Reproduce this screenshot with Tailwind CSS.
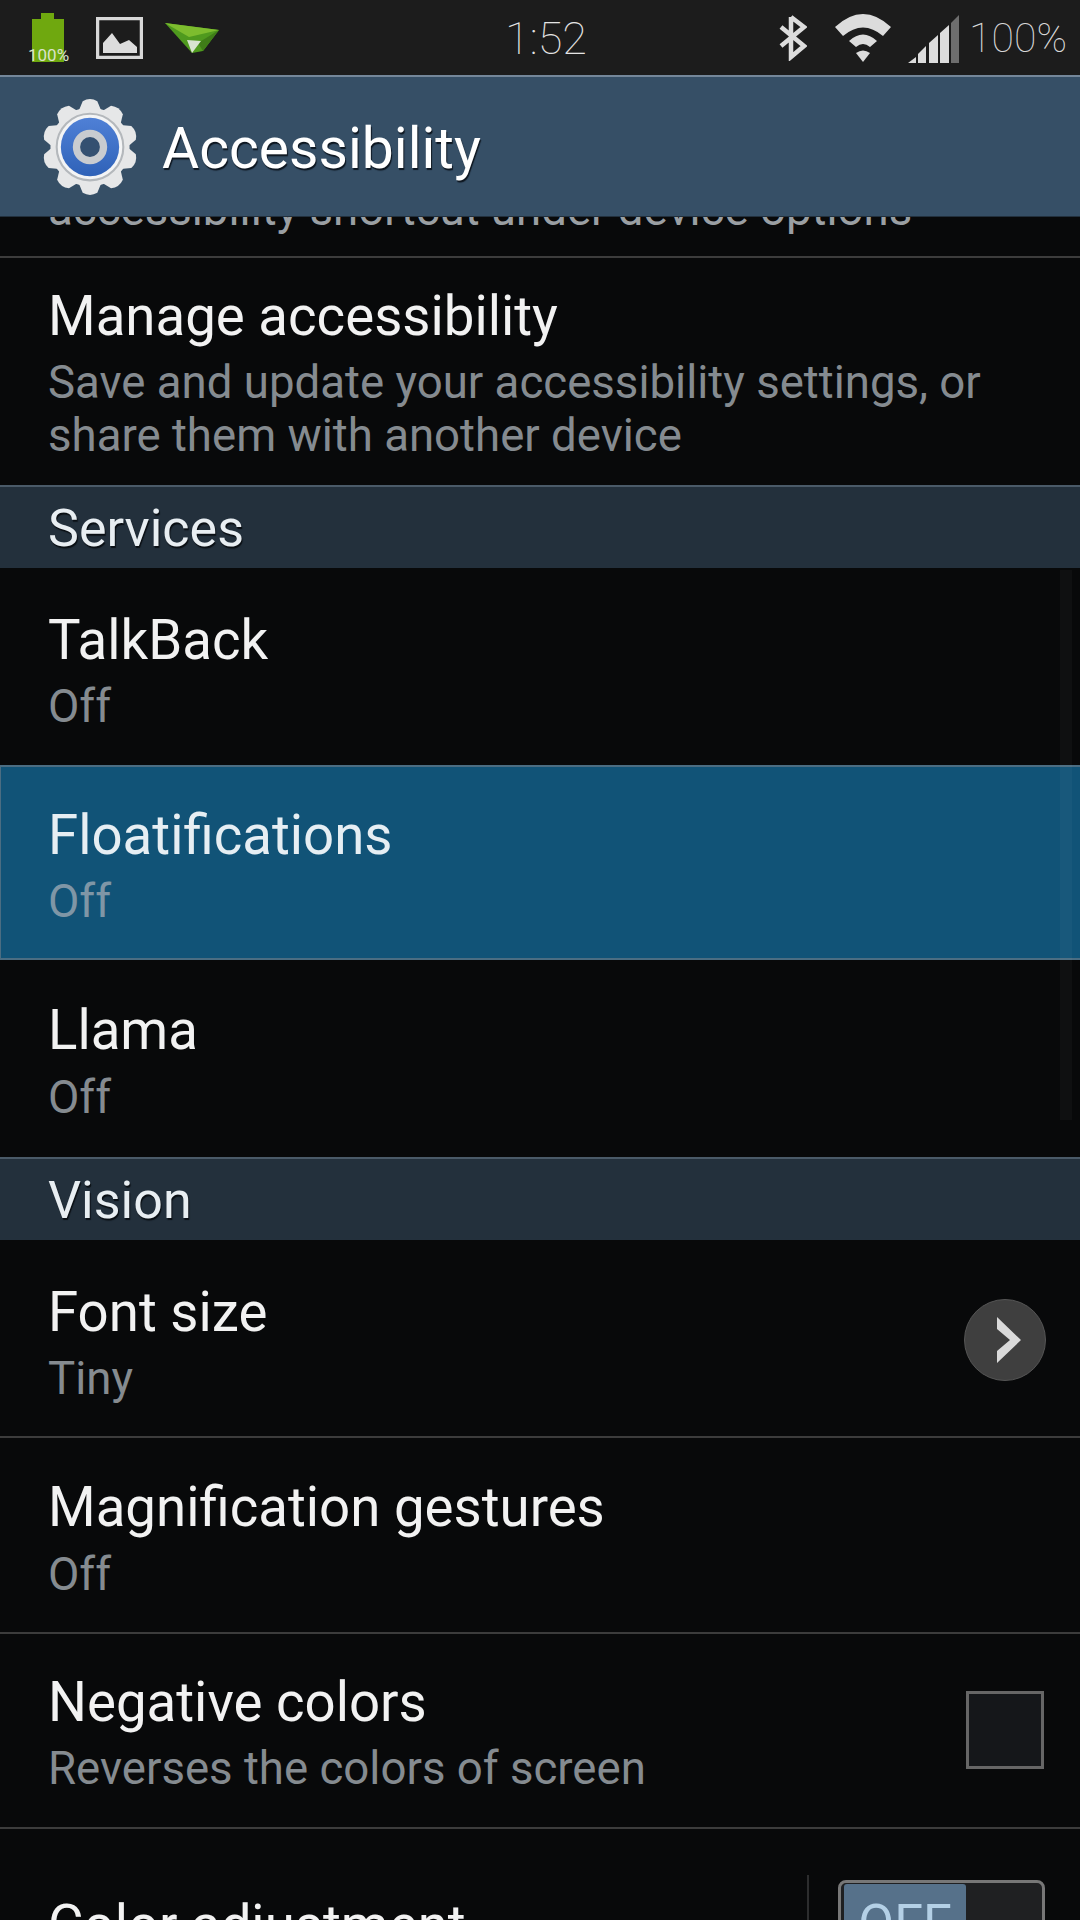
<!DOCTYPE html>
<html><head><script src="https://cdn.jsdelivr.net/npm/@tailwindcss/browser@4"></script></head>
<body class="bg-[#070809]">
<div class="relative w-[1080px] h-[1920px] overflow-hidden bg-[#08090a] font-['Roboto',sans-serif] text-white">
  <div class="h-[75px] bg-[#1c1c1c] flex items-center relative">
    <div class="flex items-center pl-[28px]">
      <div class="relative w-[39px] h-[50px]">
        <div class="absolute left-[13px] top-0 w-[13px] h-[6px] bg-[#6fa80f]"></div>
        <div class="absolute left-[4px] top-[6px] w-[32px] h-[43px] bg-[#6fa80f]"></div>
        <span class="absolute left-0 top-[33px] text-[17px] leading-[18px] text-[#dbe3cb] font-['Roboto']">100%</span>
      </div>
      <svg class="ml-[29px]" width="47" height="42" viewBox="0 0 47 42"><rect x="1.5" y="1.5" width="44" height="39" fill="none" stroke="#d8d8d8" stroke-width="3.5"/><path d="M7 36V26L16 16L24 27L33 23L41 30V36Z" fill="#dcdcdc"/></svg>
      <svg class="ml-[22px]" width="54" height="30" viewBox="0 0 54 30"><path d="M0 0L54 7L38 28L27 30Z" fill="#4f9a1e"/><path d="M0 0L54 7L24 14Z" fill="#7dbd2e"/><path d="M54 7L38 28L33 20Z" fill="#3f7d18"/><path d="M22 17L36 18L27 30Z" fill="#d8e4d0"/></svg>
    </div>
    <span class="absolute left-[505px] top-[13px] text-[45px] leading-[52px] font-thin text-[#e4e4e4]">1:52</span>
    <div class="absolute right-0 top-0 h-[75px]">
      <svg class="absolute right-[273px] top-[13px]" width="29" height="48" viewBox="0 0 29 48"><path d="M13 4V44L26 33L3 14M13 4L26 14L3 33" fill="none" stroke="#dcdcdc" stroke-width="4.5"/></svg>
      <svg class="absolute right-[189px] top-[13px]" width="56" height="49" viewBox="0 0 56 49"><path d="M0 14Q28 -12 56 14L48 23Q28 6 8 23Z" fill="#dcdcdc"/><path d="M14 28Q28 15 42 28L35 34Q28 28 21 34Z" fill="#dcdcdc"/><path d="M21 40Q28 35 35 40L28 49Z" fill="#dcdcdc"/></svg>
      <svg class="absolute right-[120px] top-[14px]" width="52" height="50" viewBox="0 0 52 50"><path d="M0 49L8 43V49Z M10 49V40L18 32V49Z M21 49V29L30 21V49Z M32 49V19L41 11V49Z" fill="#dcdcdc"/><path d="M43 49V9L51 1V49Z" fill="#6e6e6e"/></svg>
      <span class="absolute right-[13px] top-[15px] text-[41px] leading-[46px] font-thin text-[#d8d8d8]">100%</span>
    </div>
  </div>
  <div class="h-[142px] bg-[#364f66] border-t-2 border-[#74879a] border-b border-b-[#22303d] flex items-center pl-[40px] relative z-10">
    <svg width="100" height="100" viewBox="0 0 96 96"><defs><linearGradient id="b" x1="0" y1="0" x2="0" y2="1"><stop offset="0" stop-color="#4f80d6"/><stop offset="1" stop-color="#2f62b8"/></linearGradient></defs><g fill="#e6e7e8"><circle cx="48" cy="48" r="38"/><path d="M36 16L41 4Q48 0 55 4L60 16Z"/><path d="M36 16L41 4Q48 0 55 4L60 16Z" transform="rotate(36 48 48)"/><path d="M36 16L41 4Q48 0 55 4L60 16Z" transform="rotate(72 48 48)"/><path d="M36 16L41 4Q48 0 55 4L60 16Z" transform="rotate(108 48 48)"/><path d="M36 16L41 4Q48 0 55 4L60 16Z" transform="rotate(144 48 48)"/><path d="M36 16L41 4Q48 0 55 4L60 16Z" transform="rotate(180 48 48)"/><path d="M36 16L41 4Q48 0 55 4L60 16Z" transform="rotate(216 48 48)"/><path d="M36 16L41 4Q48 0 55 4L60 16Z" transform="rotate(252 48 48)"/><path d="M36 16L41 4Q48 0 55 4L60 16Z" transform="rotate(288 48 48)"/><path d="M36 16L41 4Q48 0 55 4L60 16Z" transform="rotate(324 48 48)"/></g><circle cx="48" cy="48" r="32" fill="#f3f4f5" stroke="#b4b8bc" stroke-width="2"/><circle cx="48" cy="48" r="28" fill="url(#b)"/><circle cx="48" cy="48" r="13" fill="#345071" stroke="#c9ccd0" stroke-width="7"/></svg>
    <span class="ml-[22px] mt-[5px] text-[57px] leading-[64px] text-white [text-shadow:1px_2px_1px_#0d1620]">Accessibility</span>
  </div>
  <div class="absolute left-[1060px] top-[570px] w-[12px] h-[550px] bg-white/[0.03] z-10"></div>
  <div class="relative">
    <div class="h-[41px] border-b-2 border-[#3c3c3c] overflow-hidden">
      <p class="pl-[48px] -mt-[33px] text-[45.6px] leading-[52px] text-[#9a9fa3]">accessibility shortcut under device options</p>
    </div>
    <div class="h-[227px] pl-[48px] pt-[28px]">
      <p class="text-[54.6px] leading-[60px] text-[#f2f2f2]">Manage accessibility</p>
      <p class="mt-[10px] text-[45.6px] leading-[53px] text-[#858b90]">Save and update your accessibility settings, or<br>share them with another device</p>
    </div>
    <div class="h-[83px] bg-[#23303c] border-t-2 border-[#4a5a68] pl-[48px] pt-[3px] flex items-center text-[52px] text-[#e8eef2] [text-shadow:1px_2px_1px_#0a0f14]">Services</div>
    <div class="h-[197px] pl-[48px] pt-[42px]">
      <p class="text-[54.6px] leading-[60px] text-[#f2f2f2]">TalkBack</p>
      <p class="mt-[10px] text-[45.6px] leading-[53px] text-[#858b90]">Off</p>
    </div>
    <div class="h-[195px] bg-[#115377] border-y-2 border-l border-[#4b6d82] pl-[47px] pt-[38px]">
      <p class="text-[54.6px] leading-[60px] text-[#e6eef3]">Floatifications</p>
      <p class="mt-[10px] text-[45.6px] leading-[53px] text-[#7f96a6]">Off</p>
    </div>
    <div class="h-[195px] mt-[2px] pl-[48px] pt-[38px]">
      <p class="text-[54.6px] leading-[60px] text-[#f2f2f2]">Llama</p>
      <p class="mt-[11px] text-[45.6px] leading-[53px] text-[#858b90]">Off</p>
    </div>
    <div class="h-[83px] bg-[#23303c] border-t-2 border-[#4a5a68] pl-[48px] pt-[3px] flex items-center text-[52px] text-[#e8eef2] [text-shadow:1px_2px_1px_#0a0f14]">Vision</div>
    <div class="h-[198px] pl-[48px] pt-[42px] pr-[34px] border-b-2 border-[#3c3c3c] flex justify-between">
      <div>
        <p class="text-[54.6px] leading-[60px] text-[#f2f2f2]">Font size</p>
        <p class="mt-[10px] text-[45.6px] leading-[53px] text-[#858b90]">Tiny</p>
      </div>
      <div class="w-[82px] h-[82px] mt-[17px] pl-[8px] rounded-full bg-[#3f3f3f] border border-[#555] flex items-center justify-center">
        <svg width="24" height="46" viewBox="0 0 24 46"><path d="M0 0L24 23L0 46V34L13 23L0 12Z" fill="#dadada"/></svg>
      </div>
    </div>
    <div class="h-[196px] pl-[48px] pt-[39px] border-b-2 border-[#3c3c3c]">
      <p class="text-[54.6px] leading-[60px] text-[#f2f2f2]">Magnification gestures</p>
      <p class="mt-[11px] text-[45.6px] leading-[53px] text-[#858b90]">Off</p>
    </div>
    <div class="h-[195px] pl-[48px] pt-[38px] pr-[36px] border-b-2 border-[#3c3c3c] flex justify-between">
      <div>
        <p class="text-[54.6px] leading-[60px] text-[#f2f2f2]">Negative colors</p>
        <p class="mt-[10px] text-[45.6px] leading-[53px] text-[#858b90]">Reverses the colors of screen</p>
      </div>
      <div class="w-[78px] h-[78px] mt-[19px] bg-[#15171a] border-[3px] border-[#666]"></div>
    </div>
    <div class="pl-[48px] pr-[35px] flex justify-between">
      <p class="mt-[66px] text-[54.6px] leading-[60px] text-[#f2f2f2]">Color adjustment</p>
      <div class="flex items-start gap-[29px] mt-[51px]">
        <div class="w-[2px] h-[60px] -mt-[5px] bg-[#2c2d2e]"></div>
        <div class="w-[207px] h-[60px] rounded-[8px] border-[3px] border-[#777] bg-[#1f2022] pl-[3px] pt-[1px]">
          <div class="w-[122px] h-[60px] rounded-[3px] bg-[#56718a] text-[52px] leading-[80px] text-center text-[#b4d0e6]">OFF</div>
        </div>
      </div>
    </div>
  </div>
</div>
</body></html>
